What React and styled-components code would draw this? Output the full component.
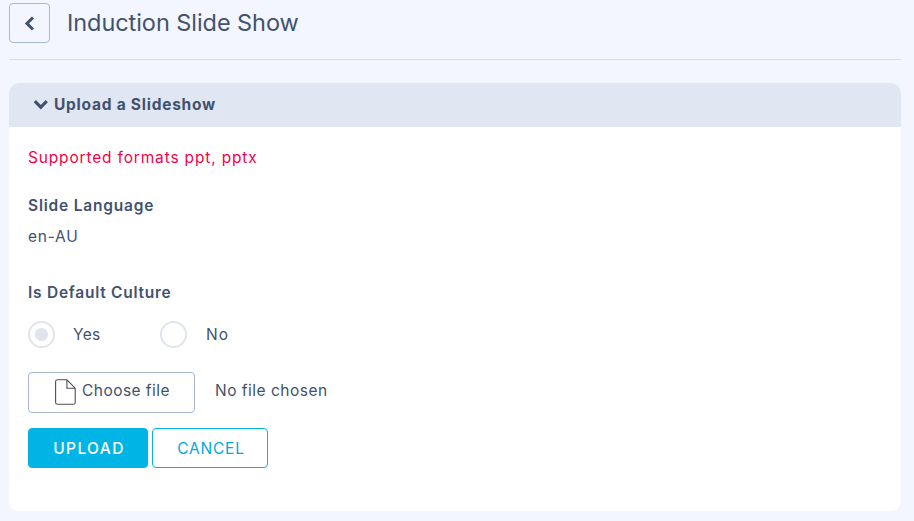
import React, { useState } from 'react'
import styled, { createGlobalStyle } from 'styled-components'

const GlobalStyle = createGlobalStyle`
  * {
    box-sizing: border-box;
  }

  body {
    margin: 0;
    color: #42526e;
    background-color: #f3f6fe;
    font-family: Inter, 'Open Sans', sans-serif;
    font-size: 15.5px;
    line-height: 24px;
  }
`

const Page = styled.main`
  padding: 3px 13px 10px 9px;
`

const PageHeader = styled.header`
  display: flex;
  align-items: center;
  height: 57px;
  padding-bottom: 16px;
  border-bottom: solid 1px #d8dce3;
`

const BackButton = styled.button`
  display: flex;
  align-items: center;
  justify-content: center;
  width: 41px;
  height: 40px;
  padding: 0;
  color: #42526e;
  border: solid 1px #a9b7d1;
  border-radius: 4px;
  background-color: transparent;
`

const Title = styled.h1`
  margin: 0 0 0 17px;
  font-size: 23.5px;
  font-weight: 400;
  letter-spacing: -0.06px;
  line-height: 32px;
`

const Card = styled.section`
  height: 428px;
  margin-top: 23px;
  border-radius: 10px;
  background-color: #fff;
  overflow: hidden;
`

const CardHeader = styled.div`
  display: flex;
  align-items: center;
  height: 44px;
  padding: 0 24px;
  background-color: #e0e6f2;
`

const CardTitle = styled.h2`
  margin: 0 0 0 6px;
  font-size: 15.5px;
  font-weight: 700;
  letter-spacing: 0.75px;
`

const Form = styled.form`
  padding: 19px;
`

const Text = styled.span`
  display: inline-block;
  letter-spacing: ${props => props.$spacing || 0}px;
  white-space: nowrap;
`

const Notice = styled.p`
  margin: 0 0 24px;
  color: #f5004b;
`

const Field = styled.div`
  margin-bottom: ${props => props.$gap}px;
`

const Label = styled.div`
  margin-bottom: ${props => props.$gap}px;
  font-weight: 600;
`

const RadioGroup = styled.div`
  display: flex;
  height: 27px;
`

const RadioLabel = styled.label`
  display: flex;
  align-items: center;
  gap: ${props => props.$gap}px;
  width: 132px;
`

const Radio = styled.input`
  appearance: none;
  width: 27px;
  height: 27px;
  margin: 0;
  border: solid 2px #e0e4ec;
  border-radius: 50%;
  background: ${props =>
    props.checked
      ? 'radial-gradient(circle, #e0e4ec 6px, #fff 7px)'
      : '#fff'};
`

const FileRow = styled.div`
  display: flex;
  align-items: flex-start;
  gap: 20px;
  margin-bottom: 15px;
  line-height: 38px;
`

const FileButton = styled.button`
  display: flex;
  gap: 6px;
  width: 167px;
  height: 41px;
  padding: 0 0 0 25px;
  color: inherit;
  font: inherit;
  line-height: 36px;
  border: solid 1px #a9b7d1;
  border-radius: 4px;
  background-color: #fff;
`

const Actions = styled.div`
  display: flex;
  gap: 4px;
`

const Button = styled.button`
  width: 116px;
  height: 40px;
  padding: 2px 0 0 2px;
  color: #00a8dc;
  font: inherit;
  border: solid 1px #00b5e5;
  border-radius: 4px;
  background-color: #fff;
`

const PrimaryButton = styled(Button)`
  width: 120px;
  color: #fff;
  font-weight: 500;
  background-color: #00b5e5;
`

const ChevronLeft = () => (
  <svg width="11" height="15" viewBox="0 0 11 15" fill="none">
    <path d="M9 1.5 3 7.5l6 6" stroke="currentColor" strokeWidth="3.1" />
  </svg>
)

const ChevronDown = () => (
  <svg width="15" height="10" viewBox="0 0 15 10" fill="none">
    <path d="m1.8 1.2 6 6 6-6" stroke="currentColor" strokeWidth="3.1" />
  </svg>
)

const FileIcon = () => (
  <svg width="22" height="26" viewBox="0 0 22 26" fill="none">
    <path
      d="M12.9.8H3.4A1.8 1.8 0 0 0 1.6 2.5v21a1.8 1.8 0 0 0 1.8 1.7h16a1.8 1.8 0 0 0 1.8-1.7V9.2L12.9.8Zm0 0v8.4h8.3"
      stroke="#4b4d60"
      strokeWidth="1.1"
    />
  </svg>
)

const FileIconBox = styled.span`
  display: flex;
  padding-top: 6px;
`

const App = () => {
  const [isDefault, setIsDefault] = useState(true)

  return (
    <Page>
      <GlobalStyle />
      <PageHeader>
        <BackButton aria-label="Back">
          <ChevronLeft />
        </BackButton>
        <Title>Induction Slide Show</Title>
      </PageHeader>
      <Card>
        <CardHeader>
          <ChevronDown />
          <CardTitle>Upload a Slideshow</CardTitle>
        </CardHeader>
        <Form onSubmit={e => e.preventDefault()}>
          <Notice>
            <Text $spacing={0.83}>Supported formats ppt, pptx</Text>
          </Notice>
          <Field $gap={32}>
            <Label $gap={7}>
              <Text $spacing={0.8}>Slide Language</Text>
            </Label>
            <Text $spacing={0.75}>en-AU</Text>
          </Field>
          <Field $gap={24}>
            <Label $gap={16}>
              <Text $spacing={0.75}>Is Default Culture</Text>
            </Label>
            <RadioGroup>
              <RadioLabel $gap={18}>
                <Radio
                  type="radio"
                  name="culture"
                  checked={isDefault}
                  onChange={() => setIsDefault(true)}
                />
                <Text $spacing={0.3}>Yes</Text>
              </RadioLabel>
              <RadioLabel $gap={19}>
                <Radio
                  type="radio"
                  name="culture"
                  checked={!isDefault}
                  onChange={() => setIsDefault(false)}
                />
                <Text $spacing={1}>No</Text>
              </RadioLabel>
            </RadioGroup>
          </Field>
          <FileRow>
            <FileButton type="button">
              <FileIconBox>
                <FileIcon />
              </FileIconBox>
              <Text $spacing={0.45}>Choose file</Text>
            </FileButton>
            <Text $spacing={0.5}>No file chosen</Text>
          </FileRow>
          <Actions>
            <PrimaryButton type="submit">
              <Text $spacing={1.4}>UPLOAD</Text>
            </PrimaryButton>
            <Button type="button">
              <Text $spacing={0.8}>CANCEL</Text>
            </Button>
          </Actions>
        </Form>
      </Card>
    </Page>
  )
}

export default App
